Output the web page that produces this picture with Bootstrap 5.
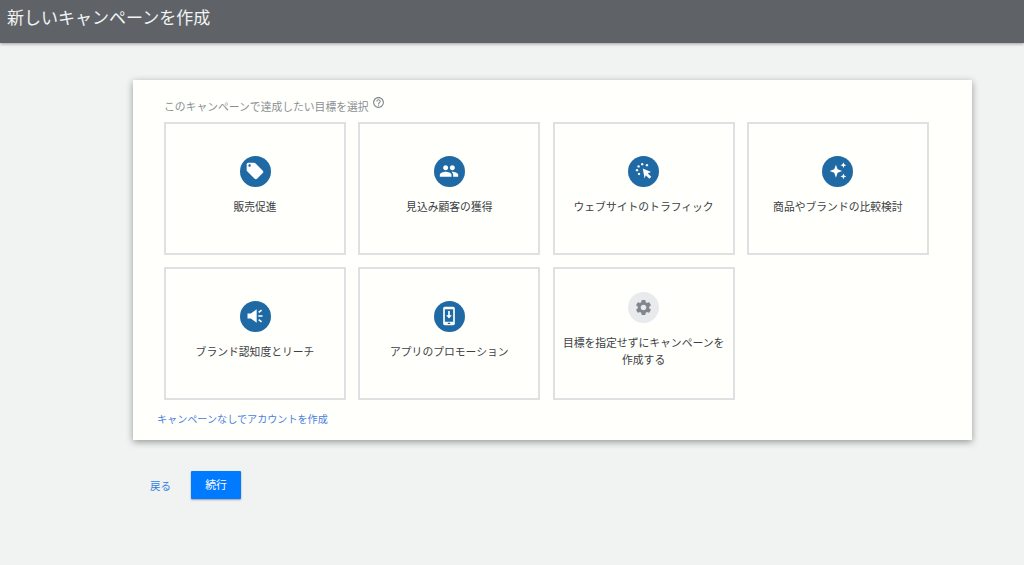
<!DOCTYPE html>
<html lang="ja">
<head>
<meta charset="utf-8">
<title>新しいキャンペーンを作成</title>
<link href="https://cdn.jsdelivr.net/npm/bootstrap@5.3.0/dist/css/bootstrap.min.css" rel="stylesheet">
<style>
html,body{height:100%;overflow:hidden}
body{background:#f1f3f3;font-family:"Liberation Sans","Noto Sans CJK JP",sans-serif;color:#3c4043}
.topbar{height:43px;background:#5f6368;color:#f1f3f4;font-size:17px;line-height:24px;padding:7px 0 0 7px;box-shadow:0 1px 3px rgba(0,0,0,.35)}
.goal-card{margin:37px 0 0 133px;width:839px;height:360px;background:#fffffc;border:0;padding:16px 0 0 31px;box-shadow:0 2px 7px rgba(0,0,0,.38)}
.goal-title{font-size:10.8px;line-height:15px;color:#8a8f94;height:26px}
.goal-title svg{width:13px;height:13px;vertical-align:2px;margin-left:0}
.tile-grid{display:grid;grid-template-columns:repeat(4,182px);grid-auto-rows:133px;column-gap:12.3px;row-gap:12px}
.goal-tile{border:2px solid #dee0e1;background:#fffffc;padding:0 6px 6px;font-size:10.8px;line-height:17px;color:#3c4043;text-align:center}
.goal-disc{width:31px;height:31px;background:#1f6aa5;margin-bottom:12px}
.goal-disc svg{width:20px;height:20px;fill:#fff}
.goal-disc.is-muted{background:#e8eaed}
.goal-disc.is-muted svg{fill:#80868b;width:19px;height:19px}
.skip-link{font-size:10.1px;line-height:15px;color:#4a80e0;text-decoration:none;margin:12px 0 0 -7px;display:block}
.footer-row{margin:31px 0 0 150px}
.back-link{font-size:10.5px;color:#2f7fe0;text-decoration:none;margin-top:3px}
.next-btn{width:50px;height:28px;padding:1px 0 0;margin-left:20px;font-size:10.8px;line-height:27px;background:#007bff;border:0;border-radius:1px;color:#fff;box-shadow:0 1px 2px rgba(0,0,0,.35)}
</style>
</head>
<body>
<header class="topbar">新しいキャンペーンを作成</header>
<main>
  <section class="card rounded-0 goal-card">
    <div class="goal-title">このキャンペーンで達成したい目標を選択 <svg viewBox="0 0 24 24" fill="#80868b"><path d="M11 18h2v-2h-2v2zm1-16C6.48 2 2 6.48 2 12s4.48 10 10 10 10-4.48 10-10S17.52 2 12 2zm0 18c-4.41 0-8-3.59-8-8s3.59-8 8-8 8 3.59 8 8-3.59 8-8 8zm0-14c-2.21 0-4 1.79-4 4h2c0-1.1.9-2 2-2s2 .9 2 2c0 2-3 1.75-3 5h2c0-2.25 3-2.5 3-5 0-2.21-1.79-4-4-4z"/></svg></div>
    <div class="tile-grid">
      <div class="goal-tile d-flex flex-column align-items-center justify-content-center">
        <span class="goal-disc rounded-circle d-flex align-items-center justify-content-center"><svg viewBox="0 0 24 24"><path d="M21.41 11.58l-9-9C12.05 2.22 11.55 2 11 2H4c-1.1 0-2 .9-2 2v7c0 .55.22 1.05.59 1.42l9 9c.36.36.86.58 1.41.58.55 0 1.05-.22 1.41-.59l7-7c.37-.36.59-.86.59-1.41 0-.55-.23-1.06-.59-1.42zM5.5 7C4.67 7 4 6.33 4 5.5S4.67 4 5.5 4 7 4.67 7 5.5 6.33 7 5.5 7z"/></svg></span>
        <span>販売促進</span>
      </div>
      <div class="goal-tile d-flex flex-column align-items-center justify-content-center">
        <span class="goal-disc rounded-circle d-flex align-items-center justify-content-center"><svg viewBox="0 0 24 24"><path d="M16 11c1.66 0 2.99-1.34 2.99-3S17.66 5 16 5c-1.66 0-3 1.34-3 3s1.34 3 3 3zm-8 0c1.66 0 2.99-1.34 2.99-3S9.66 5 8 5C6.34 5 5 6.34 5 8s1.34 3 3 3zm0 2c-2.33 0-7 1.17-7 3.5V19h14v-2.5c0-2.33-4.67-3.5-7-3.5zm8 0c-.29 0-.62.02-.97.05 1.16.84 1.97 1.97 1.97 3.45V19h6v-2.5c0-2.33-4.67-3.5-7-3.5z"/></svg></span>
        <span>見込み顧客の獲得</span>
      </div>
      <div class="goal-tile d-flex flex-column align-items-center justify-content-center">
        <span class="goal-disc rounded-circle d-flex align-items-center justify-content-center"><svg viewBox="0 0 24 24"><path d="M10.5 9l10 4.300-4 1.500 4.200 4.200-2.300 2.300-4.200-4.200-1.500 4z"/><circle cx="9.800" cy="3.800" r="1.400"/><circle cx="15.500" cy="5" r="1.400"/><circle cx="5.500" cy="6.500" r="1.400"/><circle cx="3.600" cy="11" r="1.400"/><circle cx="6" cy="15.600" r="1.400"/></svg></span>
        <span>ウェブサイトのトラフィック</span>
      </div>
      <div class="goal-tile d-flex flex-column align-items-center justify-content-center">
        <span class="goal-disc rounded-circle d-flex align-items-center justify-content-center"><svg viewBox="0 0 24 24"><path d="M9.500 4.500l2 5.500 5.500 2-5.500 2-2 6-2-6L2 12l5.500-2zM18.500 1.500l1 2.500 2.500 1-2.500 1-1 2.500-1-2.500-2.500-1 2.500-1zM18.500 15l1 2.500 2.500 1-2.500 1-1 2.500-1-2.500-2.500-1 2.500-1z"/></svg></span>
        <span>商品やブランドの比較検討</span>
      </div>
      <div class="goal-tile d-flex flex-column align-items-center justify-content-center">
        <span class="goal-disc rounded-circle d-flex align-items-center justify-content-center"><svg viewBox="0 0 24 24"><path d="M3 9h4l7-5v16l-7-5H3zM16 11h5v2h-5zM15.800 6.800l3.500-2.600 1.200 1.600L17 8.400zM15.800 17.200l3.500 2.600 1.200-1.600-3.500-2.600z"/></svg></span>
        <span>ブランド認知度とリーチ</span>
      </div>
      <div class="goal-tile d-flex flex-column align-items-center justify-content-center">
        <span class="goal-disc rounded-circle d-flex align-items-center justify-content-center"><svg viewBox="0 0 24 24"><path fill-rule="evenodd" d="M7 1h10c1.100 0 2 .9 2 2v18c0 1.100-.9 2-2 2H7c-1.100 0-2-.9-2-2V3c0-1.100.9-2 2-2zm0 3v15h10V4zm3.500 16v1.500h3V20z"/><path d="M11 6h2v5h2.500L12 15l-3.500-4H11z"/></svg></span>
        <span>アプリのプロモーション</span>
      </div>
      <div class="goal-tile d-flex flex-column align-items-center justify-content-center">
        <span class="goal-disc is-muted rounded-circle d-flex align-items-center justify-content-center"><svg viewBox="0 0 24 24"><path d="M19.140 12.940c.04-.3.06-.61.06-.94 0-.32-.02-.64-.07-.94l2.030-1.580c.18-.14.23-.41.12-.61l-1.920-3.320c-.12-.22-.37-.29-.59-.22l-2.390.96c-.5-.38-1.030-.7-1.620-.94l-.36-2.540c-.04-.24-.24-.41-.48-.41h-3.840c-.24 0-.43.17-.47.41l-.36 2.540c-.59.24-1.130.57-1.620.94l-2.390-.96c-.22-.08-.47 0-.59.22L2.740 8.870c-.12.21-.08.47.12.61l2.030 1.580c-.05.3-.09.63-.09.94s.02.64.07.94l-2.030 1.580c-.18.14-.23.41-.12.61l1.920 3.320c.12.22.37.29.59.22l2.390-.96c.5.38 1.030.7 1.620.94l.36 2.540c.05.24.24.41.48.41h3.840c.24 0 .44-.17.47-.41l.36-2.540c.59-.24 1.130-.56 1.620-.94l2.390.96c.22.08.47 0 .59-.22l1.920-3.320c.12-.22.07-.47-.12-.61l-2.010-1.580zM12 15.600c-1.980 0-3.600-1.620-3.600-3.600s1.620-3.600 3.600-3.600 3.600 1.620 3.600 3.600-1.620 3.600-3.600 3.600z"/></svg></span>
        <span>目標を指定せずにキャンペーンを作成する</span>
      </div>
    </div>
    <a class="skip-link" href="#">キャンペーンなしでアカウントを作成</a>
  </section>
  <div class="footer-row d-flex align-items-center">
    <a class="back-link" href="#">戻る</a>
    <button type="button" class="btn next-btn">続行</button>
  </div>
</main>
<script src="https://cdn.jsdelivr.net/npm/bootstrap@5.3.0/dist/js/bootstrap.bundle.min.js"></script>
</body>
</html>
